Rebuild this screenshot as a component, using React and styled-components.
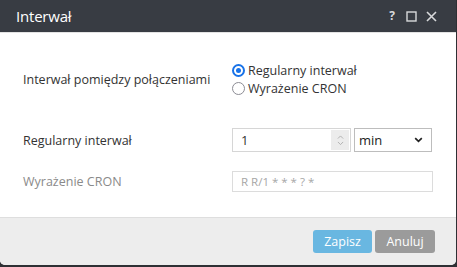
import React from 'react'
import styled, { createGlobalStyle } from 'styled-components'

const Global = createGlobalStyle`
  html, body {
    margin: 0;
    padding: 0;
    background: #2e3034;
    font-family: "Open Sans", "Noto Sans", sans-serif;
  }
`

const Dialog = styled.div`
  width: 456px;
  height: 265px;
  background: #fff;
  border-radius: 0 0 5px 5px;
  overflow: hidden;
  display: flex;
  flex-direction: column;
`

const TitleBar = styled.div`
  height: 33px;
  flex: none;
  background: #383c43;
  border-bottom: 1px solid #e3e3e3;
  display: flex;
  align-items: center;
  padding: 0 16px;
  box-sizing: border-box;
`

const Title = styled.div`
  flex: 1;
  color: #fff;
  font-size: 15px;
  letter-spacing: -0.2px;
`

const Tools = styled.div`
  display: flex;
  align-items: center;
  gap: 9px;
  color: #d8d9db;
  margin-right: 3px;
`

const Help = styled.span`
  font-size: 12px;
  font-weight: 700;
  line-height: 1;
  width: 10px;
  text-align: center;
`

const Body = styled.div`
  flex: 1;
  padding: 28px 24px 0 23px;
  display: flex;
  flex-direction: column;
`

const Row = styled.div`
  display: grid;
  grid-template-columns: 209px 1fr;
  align-items: center;
  margin-top: ${({ $top }) => $top || 0}px;
`

const Label = styled.div`
  font-size: 12.5px;
  color: ${({ $muted }) => ($muted ? '#8a8a8a' : '#333')};
`

const Radios = styled.div`
  display: flex;
  flex-direction: column;
`

const RadioLine = styled.label`
  display: flex;
  align-items: center;
  height: 18px;
  font-size: 12.5px;
  color: #333;
  gap: 3px;
`

const RadioDot = styled.span`
  width: 13px;
  height: 13px;
  box-sizing: border-box;
  border-radius: 50%;
  border: ${({ $on }) => ($on ? '2px solid #1a73e8' : '1.5px solid #8c8c94')};
  display: flex;
  align-items: center;
  justify-content: center;
  &::after {
    content: '';
    display: ${({ $on }) => ($on ? 'block' : 'none')};
    width: 5px;
    height: 5px;
    border-radius: 50%;
    background: #1a73e8;
  }
`

const Controls = styled.div`
  display: flex;
  gap: 3px;
`

const NumberBox = styled.div`
  width: 119px;
  height: 24px;
  box-sizing: border-box;
  border: 1px solid #d6d6d6;
  display: flex;
  align-items: center;
  padding: 0 1px 0 8px;
  font-size: 13px;
  color: #333;
`

const NumberValue = styled.span`
  flex: 1;
`

const Spinner = styled.div`
  width: 18px;
  height: 20px;
  background: #ececec;
  display: flex;
  flex-direction: column;
  align-items: center;
  justify-content: center;
  gap: 1px;
`

const Select = styled.div`
  width: 78px;
  height: 24px;
  box-sizing: border-box;
  border: 1px solid #bdbdbd;
  display: flex;
  align-items: center;
  justify-content: space-between;
  padding: 0 8px 0 4px;
  font-size: 13px;
  color: #222;
`

const TextBox = styled.div`
  width: 201px;
  height: 21px;
  box-sizing: border-box;
  border: 1px solid #dcdcdc;
  display: flex;
  align-items: center;
  padding: 0 8px;
  font-size: 11.5px;
  color: #a6a6a6;
`

const Footer = styled.div`
  height: 48px;
  flex: none;
  box-sizing: border-box;
  background: #ededed;
  border-top: 1px solid #dedede;
  display: flex;
  justify-content: flex-end;
  align-items: flex-start;
  padding: 12px 21px 0 0;
  gap: 3px;
`

const Button = styled.button`
  height: 23px;
  width: ${({ $w }) => $w}px;
  border: none;
  border-radius: 3px;
  background: ${({ $primary }) => ($primary ? '#69b7e1' : '#9b9b9b')};
  color: #fff;
  font-family: inherit;
  font-size: 12.5px;
  padding: 0;
`

const Chevron = ({ up, size = 7, color = '#aaa', width = 1 }) => (
  <svg width={size} height={size / 2 + 1} viewBox="0 0 8 5">
    <path
      d={up ? 'M1 4 L4 1 L7 4' : 'M1 1 L4 4 L7 1'}
      fill="none"
      stroke={color}
      strokeWidth={width}
    />
  </svg>
)

const App = () => {
  return (
    <>
      <Global />
      <Dialog>
        <TitleBar>
          <Title>Interwał</Title>
          <Tools>
            <Help>?</Help>
            <svg width="11" height="11" viewBox="0 0 11 11">
              <rect x="1" y="1" width="9" height="9" fill="none" stroke="#d8d9db" strokeWidth="1.4" />
            </svg>
            <svg width="11" height="11" viewBox="0 0 11 11">
              <path d="M1 1 L10 10 M10 1 L1 10" stroke="#d8d9db" strokeWidth="1.6" />
            </svg>
          </Tools>
        </TitleBar>
        <Body>
          <Row>
            <Label>Interwał pomiędzy połączeniami</Label>
            <Radios>
              <RadioLine><RadioDot $on />Regularny interwał</RadioLine>
              <RadioLine><RadioDot />Wyrażenie CRON</RadioLine>
            </Radios>
          </Row>
          <Row $top={31}>
            <Label>Regularny interwał</Label>
            <Controls>
              <NumberBox>
                <NumberValue>1</NumberValue>
                <Spinner>
                  <Chevron up />
                  <Chevron />
                </Spinner>
              </NumberBox>
              <Select>
                <span>min</span>
                <Chevron size={9} color="#222" width={1.5} />
              </Select>
            </Controls>
          </Row>
          <Row $top={19}>
            <Label $muted>Wyrażenie CRON</Label>
            <TextBox>R R/1 * * * ? *</TextBox>
          </Row>
        </Body>
        <Footer>
          <Button $primary $w={59}>Zapisz</Button>
          <Button $w={60}>Anuluj</Button>
        </Footer>
      </Dialog>
    </>
  )
}

export default App
